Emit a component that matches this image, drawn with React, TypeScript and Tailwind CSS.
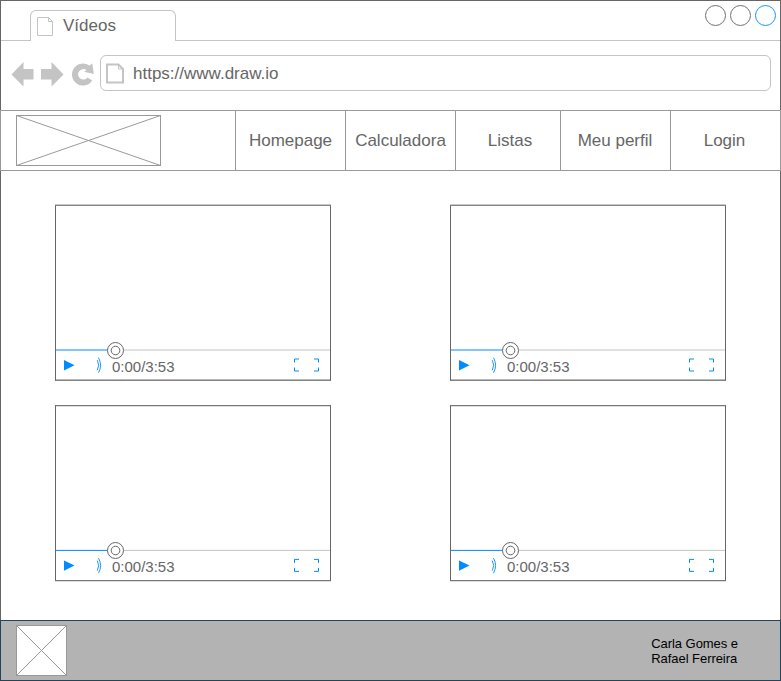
import React from "react";

function CrossBox({ className, w, h }: { className: string; w: number; h: number }) {
  return (
    <svg className={className} width={w} height={h} fill="#fff" stroke="#999">
      <rect x="0.5" y="0.5" width={w - 1} height={h - 1} />
      <path d={`M0.5 0.5L${w - 0.5} ${h - 0.5}M${w - 0.5} 0.5L0.5 ${h - 0.5}`} />
    </svg>
  );
}

function Player({ shift, edges }: { shift: number; edges: string }) {
  return (
    <div className={`flex h-[176px] w-[276px] flex-col border border-x-[#666] bg-white ${edges}`}>
      <div className="h-[134px] shrink-0" />
      <svg className="-ml-px h-5 w-[275px] shrink-0" fill="none">
        <path d={`M61 ${10 + shift}H275`} stroke="#c4c4c4" />
        <path d={`M1 ${10 + shift}H61`} stroke="#008cff" />
        <circle cx="60.5" cy="10.5" r="8" fill="#fff" stroke="#666" />
        <circle cx="60.5" cy="10.5" r="4.3" stroke="#666" />
      </svg>
      <div className="flex h-5 items-start">
        <svg className="ml-2 h-5 w-[11px]" fill="#008cff">
          <path d="M0 0L10.5 5.2L0 10.4Z" transform={`translate(0 ${shift})`} />
        </svg>
        <svg className="ml-[21px] mt-[-3px] h-5 w-[7px]" fill="none" stroke="#008cff" strokeWidth="0.9">
          <g transform={`translate(0.5 ${shift})`}>
            <path d="M0.8 3.2Q3.6 8.2 0.8 13.2M2 0.7Q6.2 8.2 2 15.7" />
          </g>
        </svg>
        <span className="ml-[9px] mt-[-2px] text-[15px] leading-[18px]">0:00/3:53</span>
        <svg className="ml-auto mr-[10px] mt-[-2px] h-4 w-[27px]" fill="none" stroke="#008cff">
          <g transform={`translate(0 ${shift})`}>
            <path d="M1.5 4.5V1H6M1.5 9.5V13H6M21 1H25.5V4.5M21 13H25.5V9.5" />
          </g>
        </svg>
      </div>
    </div>
  );
}

const topEdges = "border-y-[#858585] shadow-[0_-1px_0_#c8c8c8,inset_0_-1px_0_#b8b8b8]";
const bottomEdges = "border-y-[#777] shadow-[0_1px_0_#dedede,inset_0_1px_0_#dedede]";

const links = [
  { label: "Homepage", style: "w-[110px]" },
  { label: "Calculadora", style: "w-[110px]" },
  { label: "Listas", style: "w-[105px] pl-[4px]" },
  { label: "Meu perfil", style: "w-[110px] pr-px" },
  { label: "Login", style: "w-[110px] pr-[2px]" },
];

export default function App() {
  return (
    <div className="flex h-[681px] w-[781px] flex-col overflow-hidden bg-white font-['Liberation_Sans',Arial,sans-serif] text-[17px] text-[#666]">
      <header className="flex h-[110px] shrink-0 flex-col border-x border-t border-[#666]">
        <div className="flex h-10 shrink-0">
          <div className="w-[29px] border-b border-[#c4c4c4]" />
          <div className="mt-[9px] flex w-[146px] items-start rounded-t-[6px] border-x border-t border-[#c4c4c4]">
            <svg className="ml-[6px] mt-[6px] h-[19px] w-[16px]" fill="none" stroke="#c4c4c4">
              <path d="M0.5 0.5H11.5L15.5 4.5V18.5H0.5ZM11.5 0.5V4.5H15.5" />
            </svg>
            <span className="ml-[10px] mt-[5px] leading-5">Vídeos</span>
          </div>
          <div className="flex flex-1 justify-end border-b border-[#c4c4c4]">
            <svg className="mr-[3px] mt-[3px] h-6 w-[73px]" fill="none" stroke="#707070">
              <circle cx="11.5" cy="11.5" r="10" />
              <circle cx="36.5" cy="11.5" r="10" />
              <circle cx="61.5" cy="11.5" r="10" stroke="#1496ff" />
            </svg>
          </div>
        </div>
        <div className="flex items-start pt-[14px]">
          <svg className="ml-[10px] mt-[6px] h-[26px] w-[84px]" fill="#c4c4c4">
            <path d="M0.5 13.5L12.5 1V8H22.5V18.5H12.5V25.5Z" />
            <path d="M52.5 13.5L40.5 1V8H30V18.5H40.5V25.5Z" />
            <path d="M81.3 2.5L82.8 13L73 10.8L75.5 9.2A5.2 5.2 0 1 0 76.5 16.4L81.2 19.4A11 11 0 1 1 78.3 4.5Z" />
          </svg>
          <div className="ml-[5px] flex h-9 w-[671px] items-center rounded-[6px] border border-[#c4c4c4]">
            <svg className="ml-[5px] h-[21px] w-[18px]" fill="none" stroke="#c4c4c4" strokeWidth="2">
              <path d="M1 1.5H12.5L17 6V19.5H1Z" />
              <path d="M12.5 1.5V6H17" strokeWidth="1" />
            </svg>
            <span className="ml-[9px] mt-[2px] leading-5">https://www.draw.io</span>
          </div>
        </div>
      </header>
      <nav className="flex h-[61px] shrink-0 border border-[#999]">
        <div className="w-[234px] pl-[15px] pt-1">
          <CrossBox className="block" w={145} h={51} />
        </div>
        {links.map((link) => (
          <a key={link.label} className={`${link.style} flex items-center justify-center border-l border-[#999]`}>
            {link.label}
          </a>
        ))}
      </nav>
      <main className="grid h-[449px] shrink-0 grid-cols-[276px_276px] content-start gap-x-[119px] gap-y-6 border-x border-[#666] pl-[54px] pt-[34px]">
        <Player shift={0} edges={topEdges} />
        <Player shift={0} edges={topEdges} />
        <Player shift={0.4} edges={bottomEdges} />
        <Player shift={0.4} edges={bottomEdges} />
      </main>
      <footer className="flex h-[61px] shrink-0 justify-between border border-[#23445d] bg-[#b3b3b3] text-black">
        <CrossBox className="ml-[15px] mt-1" w={51} h={51} />
        <p className="mr-[42px] mt-[15px] text-[13px] leading-[15px] tracking-[-0.05px]">
          Carla Gomes e
          <br />
          Rafael Ferreira
        </p>
      </footer>
    </div>
  );
}
